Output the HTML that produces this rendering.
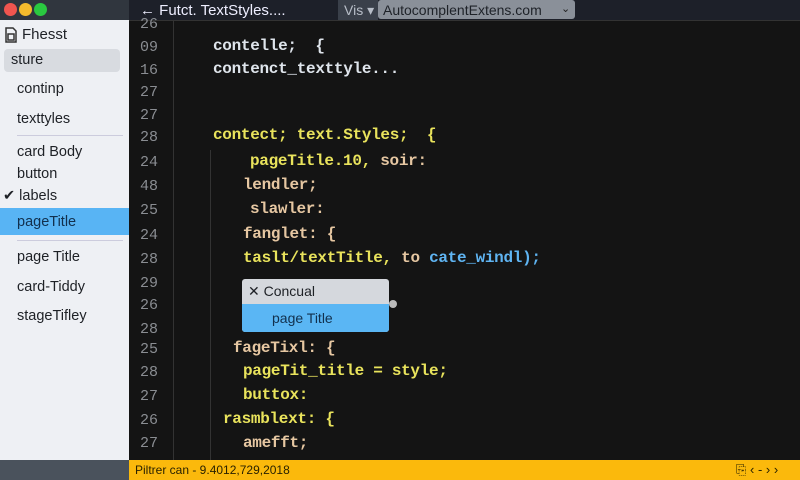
<!DOCTYPE html><html><head><style>
*{margin:0;padding:0;box-sizing:border-box}
body{width:800px;height:480px;overflow:hidden;background:#141414;position:relative;font-family:"Liberation Sans",sans-serif}
.a{position:absolute;white-space:pre}
.side{position:absolute;left:0;top:0;width:129px;height:460px;background:#eef0f4}
.tb{position:absolute;left:0;top:0;width:129px;height:20px;background:#30363e}
.top{position:absolute;left:129px;top:0;width:671px;height:21px;background:#1d2029;border-bottom:1px solid #333}
.s{position:absolute;left:17px;font-size:14.5px;color:#1e2126}
.ln{position:absolute;left:140px;width:26px;font-family:"Liberation Mono",monospace;font-size:15px;color:#8a8d92}
.c{position:absolute;font-family:"Liberation Mono",monospace;font-size:16px;color:#dfe5ec;white-space:pre;font-weight:bold;letter-spacing:-0.3px}
.y{color:#e9e35c}.t{color:#e6c7a2}.b{color:#5fb4f2}
</style></head><body>
<div class="side"></div>
<div class="tb"></div>
<div class="a" style="left:4px;top:3px;width:13px;height:13px;border-radius:7px;background:#f0554f"></div>
<div class="a" style="left:19px;top:3px;width:13px;height:13px;border-radius:7px;background:#f4bb2d"></div>
<div class="a" style="left:34px;top:3px;width:13px;height:13px;border-radius:7px;background:#2ac940"></div>
<div class="top"></div>
<div class="a" style="left:140px;top:2px;font-size:15px;color:#eef">← Futct. TextStyles....</div>
<div class="a" style="left:338px;top:0;width:40px;height:20px;background:#3a404a"></div>
<div class="a" style="left:344px;top:2px;font-size:14px;color:#b8bec8">Vis ▾</div>
<div class="a" style="left:378px;top:0;width:197px;height:19px;background:#8a9099;border-radius:3px"></div>
<div class="a" style="left:383px;top:2px;font-size:14px;color:#1e2228">AutocomplentExtens.com</div>
<div class="a" style="left:561px;top:2px;font-size:11px;color:#222">⌄</div>
<svg class="a" style="left:4px;top:27px" width="14" height="16" viewBox="0 0 14 16"><path d="M2 1h7l3 3v11H2z M4 7h6v6H4z" fill="none" stroke="#333" stroke-width="1.5"/></svg>
<div class="s" style="left:22px;top:26px;font-size:15px">Fhesst</div>
<div class="a" style="left:4px;top:49px;width:116px;height:23px;background:#d8dbe0;border-radius:4px"></div>
<div class="s" style="left:11px;top:52px">sture</div>
<div class="s" style="top:81px">continp</div>
<div class="s" style="top:111px">texttyles</div>
<div class="a" style="left:17px;top:135px;width:106px;height:1px;background:#ccd"></div>
<div class="s" style="top:144px">card Body</div>
<div class="s" style="top:166px">button</div>
<div class="s" style="left:3px;top:188px">✔ labels</div>
<div class="a" style="left:0;top:208px;width:129px;height:27px;background:#58b4f4"></div>
<div class="s" style="top:214px;color:#12304d">pageTitle</div>
<div class="a" style="left:17px;top:240px;width:106px;height:1px;background:#ccd"></div>
<div class="s" style="top:249px">page Title</div>
<div class="s" style="top:279px">card-Tiddy</div>
<div class="s" style="top:308px">stageTifley</div>
<div class="a" style="left:173px;top:21px;width:1px;height:440px;background:#333"></div>
<div class="a" style="left:210px;top:150px;width:1px;height:310px;background:#333"></div>
<div class="ln" style="top:16px">26</div>
<div class="ln" style="top:39px">09</div>
<div class="ln" style="top:62px">16</div>
<div class="ln" style="top:84px">27</div>
<div class="ln" style="top:107px">27</div>
<div class="ln" style="top:129px">28</div>
<div class="ln" style="top:154px">24</div>
<div class="ln" style="top:178px">48</div>
<div class="ln" style="top:202px">25</div>
<div class="ln" style="top:227px">24</div>
<div class="ln" style="top:251px">28</div>
<div class="ln" style="top:275px">29</div>
<div class="ln" style="top:297px">26</div>
<div class="ln" style="top:321px">28</div>
<div class="ln" style="top:341px">25</div>
<div class="ln" style="top:364px">28</div>
<div class="ln" style="top:388px">27</div>
<div class="ln" style="top:412px">26</div>
<div class="ln" style="top:435px">27</div>
<div class="c" style="left:213px;top:37px">contelle;  {</div>
<div class="c" style="left:213px;top:60px">contenct_texttyle...</div>
<div class="c y" style="left:213px;top:126px">contect; text.Styles;  {</div>
<div class="c y" style="left:250px;top:152px">pageTitle.10, <span class="t">soir:</span></div>
<div class="c t" style="left:243px;top:176px">lendler;</div>
<div class="c t" style="left:250px;top:200px">slawler:</div>
<div class="c t" style="left:243px;top:225px">fanglet: {</div>
<div class="c y" style="left:243px;top:249px">taslt/textTitle, <span class="t">to</span> <span class="b">cate_windl);</span></div>
<div class="c t" style="left:233px;top:339px">fageTixl: {</div>
<div class="c y" style="left:243px;top:362px">pageTit_title = style;</div>
<div class="c y" style="left:243px;top:386px">buttox:</div>
<div class="c y" style="left:223px;top:410px">rasmblext: {</div>
<div class="c t" style="left:243px;top:434px">amefft;</div>
<div class="a" style="left:242px;top:279px;width:147px;height:53px;background:#d5d8dd;border-radius:3px;overflow:hidden">
<div style="position:absolute;left:0;top:25px;width:147px;height:28px;background:#5ab6f4"></div>
<div style="position:absolute;left:6px;top:4px;font-size:14px;color:#1e2126">✕ Concual</div>
<div style="position:absolute;left:30px;top:31px;font-size:14px;color:#12304d">page Title</div>
</div>
<div class="a" style="left:389px;top:300px;width:8px;height:8px;border-radius:4px;background:#bbb"></div>
<div class="a" style="left:0;top:460px;width:129px;height:20px;background:#4a525c"></div>
<div class="a" style="left:129px;top:460px;width:671px;height:20px;background:#fbb90c"></div>
<div class="a" style="left:135px;top:463px;font-size:12px;color:#2a2200">Piltrer can - 9.4012,729,2018</div>
<div class="a" style="left:736px;top:462px;font-size:13px;color:#2a2200">⎘ ‹ - › ›</div>
</body></html>
